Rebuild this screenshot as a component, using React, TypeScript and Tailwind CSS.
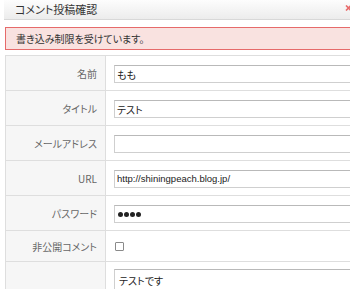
import React from "react";

const font = "font-['Noto_Sans_CJK_JP','Noto_Sans',sans-serif] [font-feature-settings:'palt']";

function Row({
  label,
  children,
  h = "",
  inner = "pt-[9px] pb-[7px] items-start",
}: {
  label: string;
  children: React.ReactNode;
  h?: string;
  inner?: string;
}) {
  return (
    <div className={`flex border-b border-[#dedede] ${h}`}>
      <div className="w-[100px] shrink-0 bg-[#f6f6f6] border-r border-[#dedede] flex items-center justify-end pr-[8px] text-[10px] text-[#666]">
        {label}
      </div>
      <div className={`flex-1 pl-[8px] flex ${inner}`}>{children}</div>
    </div>
  );
}

function Input({ value, mono = false }: { value?: string; mono?: boolean }) {
  return (
    <div
      className={`w-[300px] h-[18px] border border-[#cfcfcf] border-t-[#b9b9b9] bg-white flex items-center pl-[2px] text-[#222] ${
        mono ? "font-['Liberation_Sans',sans-serif] text-[9.5px]" : "text-[10px]"
      }`}
    >
      {value}
    </div>
  );
}

export default function App() {
  return (
    <div className={`w-[350px] h-[289px] overflow-hidden bg-white relative ${font}`}>
      <div className="ml-[4px] w-[360px] h-[20px] border-b border-[#d8d8d8] bg-gradient-to-b from-[#fdfdfd] to-[#ececec] flex items-center pl-[11px] text-[11px] text-[#333]">
        コメント投稿確認
      </div>
      <svg className="absolute left-[345px] top-[5px]" width="8" height="6" viewBox="0 0 8 6">
        <path d="M1 0.5 L6 5.5 M6 0.5 L1 5.5" stroke="#e86b6b" strokeWidth="1.6" />
      </svg>
      <div className="mt-[7px] ml-[5px] w-[360px] h-[23px] border border-[#e66a6a] bg-[#f9e2e0] flex items-center pl-[10px] text-[10px] text-[#333]">
        書き込み制限を受けています。
      </div>
      <div className="mt-[5px] ml-[5px] w-[360px] border-t border-l border-[#dedede]">
        <Row label="名前">
          <Input value="もも" />
        </Row>
        <Row label="タイトル">
          <Input value="テスト" />
        </Row>
        <Row label="メールアドレス">
          <Input />
        </Row>
        <Row label="URL">
          <Input value="http://shiningpeach.blog.jp/" mono />
        </Row>
        <Row label="パスワード">
          <div className="w-[300px] h-[18px] border border-[#cfcfcf] border-t-[#b9b9b9] bg-white flex items-center pl-[3px] gap-[1px]">
            {[0, 1, 2, 3].map((i) => (
              <span key={i} className="w-[5px] h-[5px] rounded-full bg-[#222]" />
            ))}
          </div>
        </Row>
        <Row label="非公開コメント" h="h-[31px]" inner="items-center">
          <div className="w-[9px] h-[9px] border border-[#8a8a8a] bg-white ml-[1px] rounded-[1px]" />
        </Row>
        <Row label="" inner="pt-[7px] pb-[7px] items-start">
          <div className="w-[300px] h-[40px] border border-[#cfcfcf] border-t-[#b9b9b9] bg-white pl-[4px] pt-[3px] text-[10px] text-[#222]">
            テストです
          </div>
        </Row>
      </div>
    </div>
  );
}
